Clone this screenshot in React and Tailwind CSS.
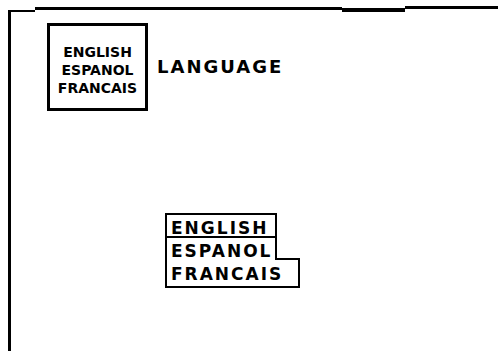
export default function App() {
  return (
    <div className="w-[498px] h-[351px] bg-white overflow-hidden flex flex-col pt-[6px] pl-[8px] font-['DejaVu_Sans',sans-serif] font-bold text-black">
      <div className="flex h-[6px] shrink-0">
        <div className="w-[27px] mt-[4px] h-[2px] bg-black" />
        <div className="w-[307px] mt-[1px] h-[3px] bg-black" />
        <div className="w-[63px] mt-[2px] h-[4px] bg-black" />
        <div className="flex-1 mt-0 h-[3px] bg-black" />
      </div>
      <div className="flex-1 border-l-[3px] border-black pl-[36px] pt-[11px] flex flex-col">
        <div className="flex items-center gap-[9px]">
          <div className="w-[101px] h-[88px] border-[3px] border-black flex flex-col items-center justify-center pt-[6px] text-[14px] leading-[18px]">
            <span>ENGLISH</span>
            <span>ESPANOL</span>
            <span>FRANCAIS</span>
          </div>
          <div className="text-[18px] leading-none tracking-[2px]">LANGUAGE</div>
        </div>
        <div className="ml-[118px] mt-[102px] w-[135px] flex flex-col text-[17px] leading-none tracking-[2px]">
          <div className="w-[112px] h-[25px] border-2 border-black pl-[4px] pt-[5px] whitespace-nowrap">ENGLISH</div>
          <div className="flex">
            <div className="w-[112px] h-[22px] border-x-2 border-black pl-[4px] pt-[5px] whitespace-nowrap">ESPANOL</div>
            <div className="flex-1 h-[22px] border-b-2 border-black" />
          </div>
          <div className="h-[28px] border-x-2 border-b-2 border-black pl-[4px] pt-[6px] whitespace-nowrap">FRANCAIS</div>
        </div>
      </div>
    </div>
  );
}
